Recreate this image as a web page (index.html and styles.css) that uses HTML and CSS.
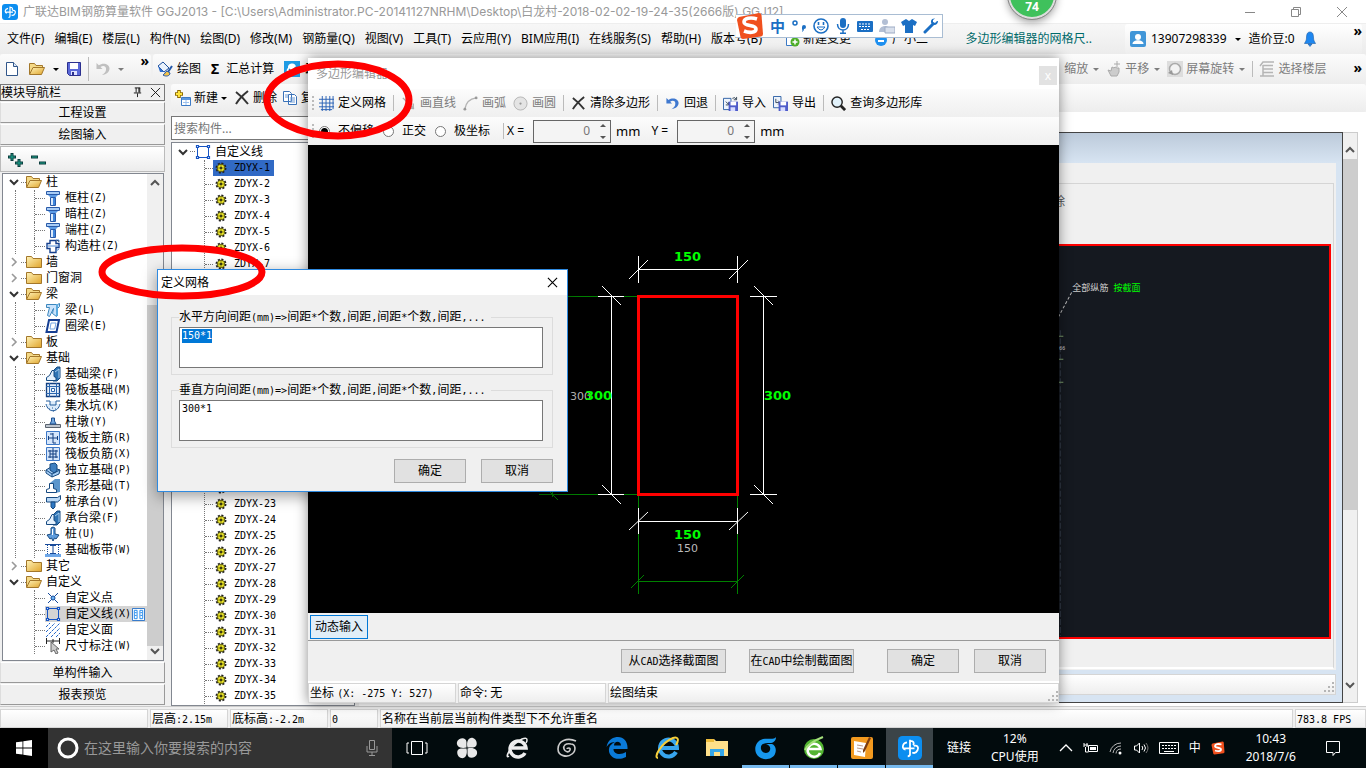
FILE: index.html
```html
<!DOCTYPE html>
<html lang="zh-CN">
<head>
<meta charset="utf-8">
<title>广联达BIM钢筋算量软件 GGJ2013</title>
<link rel="stylesheet" href="styles.css">
</head>
<body>
<svg class="sprite" aria-hidden="true">
  <defs>
    <linearGradient id="gold" x1="0" y1="0" x2="1" y2="1"><stop offset="0" stop-color="#fff3b8"/><stop offset="1" stop-color="#e0a52c"/></linearGradient>
    <linearGradient id="steel" x1="0" y1="0" x2="1" y2="0"><stop offset="0" stop-color="#fff"/><stop offset="1" stop-color="#3f86dc"/></linearGradient>
    <symbol id="app" viewBox="0 0 16 16"><rect width="16" height="16" rx="3" fill="#0c8ef0"/><path d="M8 2.500v9.500q0 1.500-1.500 1.500M6 4.300C2.500 5 2.500 9 5 9M3.500 8.200h7.500M8 3.300C10.500 3 11 5 10 6M10.500 6.500c2.500-.5 3.500 1 2.500 3s-2.500 2-3.500 1.500" fill="none" stroke="#fff" stroke-width="1.200"/></symbol>
    <symbol id="doc" viewBox="0 0 16 16"><path d="M2.500 1.500h7l4 4v9h-11z" fill="#fff" stroke="#31568a"/><path d="M9.500 1.500v4h4" fill="#dbe8f8" stroke="#31568a"/></symbol>
    <symbol id="folder-open" viewBox="0 0 16 16"><path d="M.5 13V2.500h5l1.500 2h6.500V7" fill="#f4d987" stroke="#a3772a"/><path d="M.5 13.500L4 6.500h11.500l-3 7z" fill="url(#gold)" stroke="#a3772a"/></symbol>
    <symbol id="folder" viewBox="0 0 16 16"><path d="M.5 13.500v-11h5l1.500 2h8.500v9z" fill="url(#gold)" stroke="#a3772a"/></symbol>
    <symbol id="save" viewBox="0 0 16 16"><path d="M1.500 1.500h13v13h-11l-2-2z" fill="#5a68d8" stroke="#2b2f8e"/><path d="M4 2h8v6H4z" fill="#fff"/><path d="M5 10h6v4H5z" fill="#dfe3ff"/><path d="M6 11h2v3H6z" fill="#2b2f8e"/></symbol>
    <symbol id="undo" viewBox="0 0 16 16"><path d="M1.500 2v6h6L5.500 6c3-2 6-.5 5.500 2.500 0 2-1.500 4-4 5.500 5-.5 7.500-3.500 7.500-6.500C14.500 3 8 1 3.800 4.300z" fill="currentColor"/></symbol>
    <symbol id="paint" viewBox="0 0 16 16"><path d="M1 5l5-4 6 6-5 4z" fill="#e9f1fb" stroke="#1e4f9b"/><path d="M1 5l2 6 4 0z" fill="#2f6fd0"/><path d="M15 5l-4 6" stroke="#2458a8" stroke-width="2"/><path d="M10 10c-2 1-2 3-4 4 3 2 7 1 7-2z" fill="#f3c34a" stroke="#2458a8"/></symbol>
    <symbol id="cloud" viewBox="0 0 16 16"><rect width="16" height="16" fill="#1f9be4"/><path d="M4 12a3 3 0 0 1 0-5 4 4 0 0 1 8-1 3 3 0 0 1 1 6z" fill="#fff"/><path d="M5 8l2.500 2.500L12 6" fill="none" stroke="#1f80c8" stroke-width="1.500"/></symbol>
    <symbol id="new" viewBox="0 0 16 16"><path d="M4 0v8M0 4h8" stroke="#8f6c00" stroke-width="3.600"/><path d="M4 1v6M1 4h6" stroke="#ffe33c" stroke-width="2"/><path d="M6.500 7.500h9v8h-9z" fill="#fff" stroke="#3c7ac6"/><path d="M7 8h8v2H7z" fill="#5c97df"/><path d="M8 12.500h6M11 10v5" stroke="#9cc1ee"/></symbol>
    <symbol id="cross" viewBox="0 0 16 16"><path d="M2 2c4 3 8 7 12 12M14 1C9 5 5 9 2 14" fill="none" stroke="#333" stroke-width="2"/></symbol>
    <symbol id="copy" viewBox="0 0 16 16"><path d="M1.500 1.500h6l2 2v8h-8zM6.500 4.500h6l2 2v8h-8z" fill="#fff" stroke="#3a72b9"/><path d="M8 8h5M8 10h5M8 12h5M3 5h3M3 7h3" stroke="#6c9ad4"/></symbol>
    <symbol id="grid" viewBox="0 0 16 16"><path d="M3.500 0v16M7.500 0v16M11.500 0v16M15 0v14M0 3.500h16M0 7.500h16M0 11.500h16M2 14.500h12" stroke="#2860b4"/></symbol>
    <symbol id="line" viewBox="0 0 16 16"><path d="M2 2l10 10M8 13h6M13 8v6" stroke="#aaa" stroke-width="1.500"/></symbol>
    <symbol id="arc" viewBox="0 0 16 16"><path d="M2 14C3 7 7 3 14 2" fill="none" stroke="#b4b4b4" stroke-width="1.500"/><circle cx="2" cy="14" r="1.500" fill="#999"/><circle cx="14" cy="2" r="1.500" fill="#999"/></symbol>
    <symbol id="circle" viewBox="0 0 16 16"><circle cx="8" cy="8" r="7" fill="#e4e4e4" stroke="#b4b4b4"/><circle cx="8" cy="8" r="1.200" fill="#999"/></symbol>
    <symbol id="import" viewBox="0 0 16 16"><path d="M.5 2.500h8v12h-8z" fill="#eef4fc" stroke="#2d5fa4"/><path d="M10 2.500q3-2 4 1M14.500 1v3h-3M3 6l3 3M6 6.500v3H3" fill="none" stroke="#345"/><path d="M6 6h10v10H6z" fill="#4f5cc9"/><path d="M8 6h6v4H8z" fill="#fff"/><path d="M8 12h5v4H8z" fill="#d8dcff"/></symbol>
    <symbol id="export" viewBox="0 0 16 16"><path d="M.5.500h8v12h-8z" fill="#eef4fc" stroke="#2d5fa4"/><path d="M3 3v4h4M5.500 5l2 2-2 2" fill="none" stroke="#345"/><path d="M6 6h10v10H6z" fill="#4f5cc9"/><path d="M8 6h6v4H8z" fill="#fff"/><path d="M8 12h5v4H8z" fill="#d8dcff"/></symbol>
    <symbol id="search" viewBox="0 0 16 16"><circle cx="6.500" cy="6.500" r="5.500" fill="#e2f2fb" stroke="#222" stroke-width="1.500"/><path d="M10.500 10.500L15 15" stroke="#222" stroke-width="3"/></symbol>
    <symbol id="hand" viewBox="0 0 16 16"><path d="M2 9l3 1 1-4 2 1 1-1 2 1 2 0v4l-2 4H5z" fill="#ccc" stroke="#aaa"/><path d="M11 0v6M8 3h6" stroke="#aaa"/></symbol>
    <symbol id="rotate" viewBox="0 0 16 16"><rect width="16" height="16" fill="#ddd"/><circle cx="8" cy="8" r="5.500" fill="#f3f3f3" stroke="#aaa" stroke-width="1.500"/><path d="M1 12l4-3 1 5z" fill="#999"/></symbol>
    <symbol id="floors" viewBox="0 0 16 16"><path d="M1 5l3-4h11M4 4.500h10M4 8h10M4 11.500h10M1 15h14M4 4v11" fill="none" stroke="#b5b5b5" stroke-width="1.500"/></symbol>
    <symbol id="user" viewBox="0 0 16 16"><rect width="16" height="16" rx="2" fill="#4196d8"/><circle cx="8" cy="6" r="3" fill="#fff"/><path d="M2.500 13c0-5 11-5 11 0z" fill="#fff"/></symbol>
    <symbol id="bell" viewBox="0 0 12 16"><path d="M6 1C3 1 2.500 4 2.500 7S1 11 .5 12.500h11C11 11 9.500 10 9.500 7S9 1 6 1zM4 13l2 2.500L8 13z" fill="#1e87f0" stroke="#1b5ca5" stroke-width=".6"/></symbol>
    <symbol id="col" viewBox="0 0 16 16"><path d="M1.500 1.500h13v3h-13z" fill="#a9cdf6" stroke="#2a5aa8"/><path d="M3 5h10l-2.500 2.500h-5z" fill="#5c9be6"/><path d="M5.500 7.500h5v8h-5z" fill="#dcebfc" stroke="#2a5aa8"/><path d="M9 8v7" stroke="#3f86dc" stroke-width="2"/></symbol>
    <symbol id="col2" viewBox="0 0 16 16"><path d="M5 2.500h6v3h3v4h-3v5H5v-4H2v-5h3z" fill="#fff" stroke="#153f8c" stroke-width="1.400"/><path d="M11 2l3 0v2M2 8h12M11 13l3-2" stroke="#4a86d2"/></symbol>
    <symbol id="beam" viewBox="0 0 16 16"><path d="M1.500 2.500h11l2-1v3l-3 3v7l-4-3 1-5-4 8-2-1 2-8h-3z" fill="#c8e2fb" stroke="#3b86bd"/><path d="M12 2v12" stroke="#5aa9de" stroke-width="2"/></symbol>
    <symbol id="ring" viewBox="0 0 16 16"><path d="M4 2h10l-2.500 12h-10z" fill="#fff" stroke="#163f93" stroke-width="2"/><path d="M6 5h5l-1.300 6H5z" fill="none" stroke="#75a6e5"/></symbol>
    <symbol id="found" viewBox="0 0 16 16"><path d="M7 6l5-5h3v11l-3 3H8z" fill="#2f74b4" stroke="#174a81"/><path d="M1.500 14.500v-3l3-2L7 4.500h2v6l2 1v3z" fill="#e6f2fd" stroke="#174a81"/><path d="M10 6l4-3v9" fill="none" stroke="#a9cff0"/></symbol>
    <symbol id="raft" viewBox="0 0 16 16"><path d="M1.500 1.500h13v13h-13z" fill="#e4effb" stroke="#123f80" stroke-width="1.300"/><path d="M1 4.500h14M1 11.500h14M4.500 1v14M11.500 1v14" stroke="#2c66ae"/><path d="M6.500 6.500h3v3h-3z" fill="#fff" stroke="#2c66ae"/></symbol>
    <symbol id="pit" viewBox="0 0 16 16"><path d="M1 3h4v4h6V3h4M1 6c2 9 12 9 14 0" fill="#dcebfa" stroke="#235c9c"/><path d="M4 11h1M7 10h1M10 11h1M8 13h1" stroke="#235c9c"/></symbol>
    <symbol id="pier" viewBox="0 0 16 16"><path d="M.5 10.500h15v3H.5z" fill="#bfc6cf" stroke="#5a636f"/><path d="M5 10l1.500-3V4h3v3L11 10z" fill="#73a8df" stroke="#1d4f8f"/></symbol>
    <symbol id="bar1" viewBox="0 0 16 16"><path d="M1.500 1.500h13v13h-13z" fill="#d5e6fb" stroke="#3d78c7"/><path d="M3 8h10M8 3v10M3.500 6v4M5 4h3M12.500 6v4M8 13h3" stroke="#123f80"/></symbol>
    <symbol id="bar2" viewBox="0 0 16 16"><path d="M1.500 1.500h13v13h-13z" fill="#d5e6fb" stroke="#3d78c7"/><path d="M3 5h10M3 11h10M8 2v12M5 4v8M11 4v8M5 8h6" stroke="#123f80"/></symbol>
    <symbol id="iso" viewBox="0 0 16 16"><path d="M1 8l5-3 9 3-1 4-7 3-6-4z" fill="#a5cdf4" stroke="#174a81"/><path d="M5 2l5-1 2 2v6l-3 2-4-3z" fill="#3f7fc0" stroke="#174a81"/><path d="M1 8l6 4 8-4M7 12v3" fill="none" stroke="#174a81"/></symbol>
    <symbol id="strip" viewBox="0 0 16 16"><path d="M5 5l5-4h5v13l-5 1z" fill="#5c96cc"/><path d="M1.500 14.500v-3l3-1V5.500h4v5l3 1v3z" fill="#fff" stroke="#174a81"/></symbol>
    <symbol id="cap" viewBox="0 0 16 16"><path d="M1.500 3.500h11l3-2v4l-3 2.500h-11z" fill="#b9d8f6" stroke="#174a81"/><path d="M6 8h4v5l-2 2-2-2z" fill="#2e78c4" stroke="#174a81"/></symbol>
    <symbol id="pile" viewBox="0 0 16 16"><path d="M6 2q2-2 4 0v6l4 1-3 4-1.500-1L8 15l-1.500-3-1.500 1-3-4 4-1z" fill="#5f9cdc" stroke="#174a81"/><path d="M7.500 3v6" stroke="#fff"/></symbol>
    <symbol id="slab" viewBox="0 0 16 16"><path d="M0 12h16v3H0z" fill="#6ea7e8"/><path d="M0 2.500h16M8 3v9M5 3.500h6M5 11.500h6" stroke="#174a9a"/><path d="M2.500 3v9M13.500 3v9" stroke="#174a9a" stroke-dasharray="1 1"/></symbol>
    <symbol id="pt" viewBox="0 0 16 16"><path d="M3 3l10 10M13 3L3 13" stroke="#174a9a"/><circle cx="8" cy="8" r="2" fill="#69b4f5" stroke="#174a9a"/></symbol>
    <symbol id="sq" viewBox="0 0 16 16"><path d="M2.500 2.500h11v11h-11z" fill="none" stroke="#1755c4"/><path d="M1.500 1.500h2v2h-2zM12.500 1.500h2v2h-2zM1.500 12.500h2v2h-2zM12.500 12.500h2v2h-2z" fill="#fff" stroke="#1755c4" stroke-width="1.200"/></symbol>
    <symbol id="hatch" viewBox="0 0 16 16"><path d="M1 5l4-4M1 10l9-9M1 15L15 1M6 15l9-9M11 15l4-4" stroke="#2467c9" stroke-dasharray="3 1"/></symbol>
    <symbol id="dim" viewBox="0 0 16 16"><path d="M1 3h14M1.500 0v6M8 1v4M14.500 0v6" stroke="#222"/><path d="M6 4v10l3-2 2 4 2-1-2-4h3z" fill="#ccc" stroke="#666"/></symbol>
    <symbol id="gear" viewBox="0 0 12 12"><circle cx="6" cy="6" r="4.500" fill="none" stroke="#222" stroke-width="2" stroke-dasharray="2 1.500"/><circle cx="6" cy="6" r="3.800" fill="#efe92a" stroke="#3b3900" stroke-width=".7"/><circle cx="6" cy="6" r="1.300" fill="#222"/><path d="M6 2v8M2 6h8" stroke="#555200" stroke-width=".6"/></symbol>
    <symbol id="down" viewBox="0 0 10 10"><path d="M1 3l4 4 4-4" fill="none" stroke="currentColor" stroke-width="2"/></symbol>
    <symbol id="right" viewBox="0 0 10 10"><path d="M3 1l4 4-4 4" fill="none" stroke="#999" stroke-width="1.600"/></symbol>
    <symbol id="up" viewBox="0 0 10 10"><path d="M1 7l4-4 4 4" fill="none" stroke="currentColor" stroke-width="2"/></symbol>
    <symbol id="sogou" viewBox="0 0 28 28"><path d="M3 5L23 1q2 0 2.500 2L27 22q0 2-2 2.500L7 27q-2 0-2.500-2L1 8q0-2 2-3z" fill="#f0501e"/><path d="M21 7c-6-2-13-1-13 3 0 5 12 2 12 7 0 4-7 4-12 2" fill="none" stroke="#fff" stroke-width="3.600"/></symbol>
    <symbol id="x" viewBox="0 0 12 12"><path d="M1 1l10 10M11 1L1 11" stroke="currentColor" stroke-width="1.200"/></symbol>
  </defs>
</svg>

<div class="app">
  <header class="titlebar">
    <svg class="i"><use href="#app"/></svg>
    <h1>广联达BIM钢筋算量软件 GGJ2013 - [C:\Users\Administrator.PC-20141127NRHM\Desktop\白龙村-2018-02-02-19-24-35(2666版).GGJ12]</h1>
    <div class="winctl">
      <button aria-label="最小化"><svg viewBox="0 0 12 12"><path d="M1 6.500h10" stroke="#888"/></svg></button>
      <button aria-label="还原"><svg viewBox="0 0 12 12"><path d="M1.500 3.500h7v7h-7zM3.500 3V1.500h7v7H9" fill="none" stroke="#888"/></svg></button>
      <button aria-label="关闭"><svg viewBox="0 0 12 12"><path d="M1 1l10 10M11 1L1 11" stroke="#888"/></svg></button>
    </div>
  </header>

  <nav class="menubar">
    <button>文件(F)</button><button>编辑(E)</button><button>楼层(L)</button><button>构件(N)</button><button>绘图(D)</button><button>修改(M)</button><button>钢筋量(Q)</button><button>视图(V)</button><button>工具(T)</button><button>云应用(Y)</button><button>BIM应用(I)</button><button>在线服务(S)</button><button>帮助(H)</button><button>版本号(B)</button>
    <button class="ib"><svg class="i" viewBox="0 0 16 16"><path d="M2.500 1.500h10v13h-10z" fill="#fff" stroke="#3c7ac6"/><circle cx="11" cy="11" r="4.500" fill="#4eae28"/><path d="M11 8.500v5M8.500 11h5" stroke="#fff" stroke-width="1.500"/></svg>新建变更</button>
    <button class="ib"><svg class="i" viewBox="0 0 16 16"><circle cx="8" cy="9" r="6" fill="#1e90f0"/><circle cx="3" cy="4" r="2" fill="#1e90f0"/><circle cx="13" cy="4" r="2" fill="#1e90f0"/><path d="M5 10h6" stroke="#fff" stroke-width="2"/></svg>广小二</button>
    <a class="tip" href="#">多边形编辑器的网格尺..</a>
    <div class="account">
      <svg class="i"><use href="#user"/></svg><span>13907298339</span><i class="caret"></i><span>造价豆:0</span><svg class="bell"><use href="#bell"/></svg><b class="more">»</b>
    </div>
  </nav>

  <div class="toolrow">
    <div class="strip file">
      <svg class="i"><use href="#doc"/></svg><svg class="i wide"><use href="#folder-open"/></svg><i class="caret"></i><svg class="i"><use href="#save"/></svg><i class="sep"></i><svg class="i off"><use href="#undo"/></svg><i class="caret off"></i><b class="more">»</b>
    </div>
    <div class="strip grow">
      <button class="ib"><svg class="i"><use href="#paint"/></svg>绘图</button>
      <button class="ib"><b class="sigma">Σ</b>汇总计算</button>
      <button class="ib"><svg class="i"><use href="#cloud"/></svg>云检查</button>
      <div class="right off">
        <button class="ib">缩放 <i class="caret"></i></button>
        <button class="ib"><svg class="i"><use href="#hand"/></svg>平移 <i class="caret"></i></button>
        <button class="ib"><svg class="i"><use href="#rotate"/></svg>屏幕旋转<i class="caret"></i></button>
        <i class="sep"></i>
        <button class="ib"><svg class="i"><use href="#floors"/></svg>选择楼层</button>
        <b class="more">»</b>
      </div>
    </div>
  </div>

  <main class="main">
    <aside class="nav">
      <div class="navhead"><span>模块导航栏</span><svg viewBox="0 0 12 12"><path d="M3 1h6M4.500 1v5M7.500 1v5M8.500 1v5M2 6.500h8M6 7v4" stroke="#111" fill="none"/></svg><svg viewBox="0 0 12 12"><path d="M1 1l10 10M11 1L1 11" stroke="#111"/></svg></div>
      <button class="navbtn">工程设置</button>
      <button class="navbtn">绘图输入</button>
      <div class="navtools"><svg viewBox="0 0 42 18"><path d="M6 1v8M2 5h8M13 7v8M9 11h8M25 5h7M33 11h7" stroke="#0b3d3d" stroke-width="3"/><path d="M6 2v6M3 5h6M13 8v6M10 11h6M26 5h5M34 11h5" stroke="#1ca38c"/></svg></div>
      <div class="treewrap">
        <ul class="tree">
          <li><div class="row"><svg class="ch"><use href="#down"/></svg><i></i><svg class="i"><use href="#folder-open"/></svg>柱</div>
            <ul><li><svg class="i"><use href="#col"/></svg>框柱<s>(Z)</s></li><li><svg class="i"><use href="#col"/></svg>暗柱<s>(Z)</s></li><li><svg class="i"><use href="#col"/></svg>端柱<s>(Z)</s></li><li><svg class="i"><use href="#col2"/></svg>构造柱<s>(Z)</s></li></ul></li>
          <li><div class="row"><svg class="ch"><use href="#right"/></svg><i></i><svg class="i"><use href="#folder"/></svg>墙</div></li>
          <li><div class="row"><svg class="ch"><use href="#right"/></svg><i></i><svg class="i"><use href="#folder"/></svg>门窗洞</div></li>
          <li><div class="row"><svg class="ch"><use href="#down"/></svg><i></i><svg class="i"><use href="#folder-open"/></svg>梁</div>
            <ul><li><svg class="i"><use href="#beam"/></svg>梁<s>(L)</s></li><li><svg class="i"><use href="#ring"/></svg>圈梁<s>(E)</s></li></ul></li>
          <li><div class="row"><svg class="ch"><use href="#right"/></svg><i></i><svg class="i"><use href="#folder"/></svg>板</div></li>
          <li><div class="row"><svg class="ch"><use href="#down"/></svg><i></i><svg class="i"><use href="#folder-open"/></svg>基础</div>
            <ul><li><svg class="i"><use href="#found"/></svg>基础梁<s>(F)</s></li><li><svg class="i"><use href="#raft"/></svg>筏板基础<s>(M)</s></li><li><svg class="i"><use href="#pit"/></svg>集水坑<s>(K)</s></li><li><svg class="i"><use href="#pier"/></svg>柱墩<s>(Y)</s></li><li><svg class="i"><use href="#bar1"/></svg>筏板主筋<s>(R)</s></li><li><svg class="i"><use href="#bar2"/></svg>筏板负筋<s>(X)</s></li><li><svg class="i"><use href="#iso"/></svg>独立基础<s>(P)</s></li><li><svg class="i"><use href="#strip"/></svg>条形基础<s>(T)</s></li><li><svg class="i"><use href="#cap"/></svg>桩承台<s>(V)</s></li><li><svg class="i"><use href="#found"/></svg>承台梁<s>(F)</s></li><li><svg class="i"><use href="#pile"/></svg>桩<s>(U)</s></li><li><svg class="i"><use href="#slab"/></svg>基础板带<s>(W)</s></li></ul></li>
          <li><div class="row"><svg class="ch"><use href="#right"/></svg><i></i><svg class="i"><use href="#folder"/></svg>其它</div></li>
          <li><div class="row"><svg class="ch"><use href="#down"/></svg><i></i><svg class="i"><use href="#folder-open"/></svg>自定义</div>
            <ul class="last"><li><svg class="i"><use href="#pt"/></svg>自定义点</li><li class="cur"><svg class="i"><use href="#sq"/></svg>自定义线<s>(X)</s><svg class="book" viewBox="0 0 14 14"><path d="M.5.500h13v13H.5z" fill="#fff" stroke="#246fc8"/><path d="M2.500 2.500h3v9h-3zM8.500 2.500h3v9h-3zM3 5h2M3 8h2M9 5h2M9 8h2" fill="none" stroke="#1e88ec"/></svg></li><li><svg class="i"><use href="#hatch"/></svg>自定义面</li><li><svg class="i"><use href="#dim"/></svg>尺寸标注<s>(W)</s></li></ul></li>
        </ul>
        <div class="vbar"><svg><use href="#up"/></svg><div class="t1"></div><div class="t2"></div><svg><use href="#down"/></svg></div>
      </div>
      <button class="navbtn">单构件输入</button>
      <button class="navbtn">报表预览</button>
    </aside>

    <section class="work">
      <div class="strip comp">
        <button class="ib"><svg class="i"><use href="#new"/></svg>新建<i class="caret"></i></button>
        <button class="ib"><svg class="i"><use href="#cross"/></svg>删除</button>
        <button class="ib"><svg class="i"><use href="#copy"/></svg>复制</button>
      </div>
      <div class="panes">
        <div class="list">
          <input type="text" placeholder="搜索构件..." aria-label="搜索构件">
          <div class="comps">
            <div class="root"><svg class="ch"><use href="#down"/></svg><i></i><svg class="i"><use href="#sq"/></svg>自定义线</div>
            <ul id="comps"></ul>
          </div>
        </div>
        <div class="mdi">
          <div class="child">
            <div class="cbody">
              <div class="cbox">
                <div class="ctool"><span>删除</span></div>
                <svg class="cad" viewBox="1059 246 270 390" preserveAspectRatio="xMaxYMin meet">
                  <path d="M1059 317l14-26" stroke="#bbb" stroke-dasharray="3 2"/>
                  <path d="M1061 330v305" stroke="#343c48" stroke-dasharray="6 2"/>
                  <path d="M1059 336h5M1059 359h5M1059 382h5" stroke="#7a9a6a"/>
                  <text x="1073" y="291" fill="#ccc">全部纵筋</text><text x="1114" y="291" fill="#0f0">按截面</text>
                  <text x="1060" y="350" fill="#ddd" class="tiny">66</text>
                </svg>
              </div>
            </div>
            <div class="cstat"><svg class="grip" viewBox="0 0 12 12"><path d="M9 1h2M5 5h2M9 5h2M1 9h2M5 9h2M9 9h2" stroke="#b5b5b5" stroke-width="2"/></svg></div>
          </div>
          <div class="vbar out"><svg><use href="#up"/></svg><div class="t2"></div><svg><use href="#down"/></svg></div>
        </div>
      </div>
    </section>
  </main>

  <footer class="status"><span class="c1"></span><span class="c2">层高<s>:2.15m</s></span><span class="c3">底标高<s>:-2.2m</s></span><span class="c4"><s>0</s></span><span class="c5">名称在当前层当前构件类型下不允许重名</span><span class="c6"><s>783.8 FPS</s></span></footer>

  <div class="taskbar">
    <button class="start" aria-label="开始"><svg viewBox="0 0 16 16"><path d="M0 2.300L6.500 1.400v6.200H0zM7.300 1.300L16 0v7.600H7.300zM0 8.400h6.500v6.200L0 13.700zM7.300 8.400H16V16l-8.700-1.300z" fill="#fff"/></svg></button>
    <label class="cortana"><svg viewBox="0 0 22 22"><circle cx="11" cy="11" r="9" fill="none" stroke="#fff" stroke-width="3"/></svg><input type="text" placeholder="在这里输入你要搜索的内容"><svg class="mic" viewBox="0 0 12 18"><path d="M3.500 1.500h5v9h-5zM1 7v6h10V7M6 13v4M3 16.500h6" fill="none" stroke="#999"/></svg></label>
    <div class="apps">
      <button aria-label="任务视图"><svg viewBox="0 0 24 24"><path d="M6.500 5.500h11v13h-11zM4 7H2v10h2M20 7h2v10h-2" fill="none" stroke="#fff"/></svg></button>
      <button aria-label="应用"><svg viewBox="0 0 24 24"><path d="M11.500 11.500C5 13 1 10 2 6s9-6 9.500 0zM12.500 11.500C11 5 14 1 18 2s6 9 0 9.500zM12.500 12.500C19 11 23 14 22 18s-9 6-9.500 0zM11.500 12.500C13 19 10 23 6 22s-6-9 0-9.500z" fill="#e8e8e8"/></svg></button>
      <button aria-label="浏览器"><svg viewBox="0 0 24 24"><path d="M20 17a8 8 0 1 1 1-5H7" fill="none" stroke="#eee" stroke-width="3.500"/><path d="M4 20C-1 24 5 9 17 3c8-3 4 4 4 4" fill="none" stroke="#eee" stroke-width="1.500"/></svg></button>
      <button aria-label="螺旋"><svg viewBox="0 0 24 24"><path d="M21 5C12 1 3 5 3 13c0 7 9 9 14 5 5-4 3-10-1-10-6-1-8 2-7 5s5 4 6 1-3-2-3-1" fill="none" stroke="#ccc" stroke-width="1.600"/></svg></button>
      <button aria-label="Edge"><svg viewBox="0 0 24 24"><path d="M1.500 11C3 3 9 1 13 1c6 0 10 5 9.500 12H8.500c0 6 8 6 12.500 3v5C11 26 3 20 4 13c.5-4 4-6 6-7-5 0-7 3-8.500 5zM9 9.500h7c0-5-7-5-7 0z" fill="#0a7ad8"/></svg></button>
      <button aria-label="IE"><svg viewBox="0 0 24 24"><path d="M21 16a8.500 8.500 0 1 1 1-4H7" fill="none" stroke="#37a5ee" stroke-width="4"/><path d="M3 22C-2 22 6 7 18 2c7-2 5 4 3 7" fill="none" stroke="#f6cf3c" stroke-width="2"/></svg></button>
      <button aria-label="文件资源管理器"><svg viewBox="0 0 24 24"><path d="M1 3h8l2 2h12v15H1z" fill="#ffe08a"/><path d="M1 3h8v3H1z" fill="#eebd3c"/><path d="M5 20v-7h14v7h-4v-4H9v4z" fill="#35a6e8"/></svg></button>
      <button class="run" aria-label="广联达G"><svg viewBox="0 0 24 24"><path d="M22 1c-2 3-8 1-13 2C2 5 0 12 2 17c3 8 16 8 19 1 2-5 0-9-3-10h-6c3 1 5 3 4 6-1 4-8 4-9-1-1-6 5-6 9-6 3 0 6-2 6-6z" fill="#1798ee"/></svg></button>
      <button class="run" aria-label="360"><svg viewBox="0 0 24 24"><circle cx="12" cy="13" r="10" fill="#53b532"/><path d="M18 17a6.500 6.500 0 1 1 .5-4H7" fill="none" stroke="#fff" stroke-width="2.500"/><path d="M3 14C7 6 16 3 21 1" fill="none" stroke="#a5e07c" stroke-width="2"/></svg></button>
      <button class="run" aria-label="记事"><svg viewBox="0 0 24 24"><rect x="1" y="1" width="22" height="22" rx="2" fill="#f29a1f"/><path d="M4 5l12 2-1 14-11-2z" fill="#fff"/><path d="M7 9l6 1M7 12l6 1M7 15l4 1" stroke="#b98"/><path d="M21 2l-6 13-2 2 0-3 6-13z" fill="#7a3b10"/></svg></button>
      <button class="run act" aria-label="钢筋算量"><svg viewBox="0 0 16 16"><use href="#app"/></svg></button>
    </div>
    <div class="tray">
      <span>链接</span>
      <span class="two">12%<br>CPU使用</span>
      <svg viewBox="0 0 14 14"><path d="M1 10l6-6 6 6" fill="none" stroke="#fff" stroke-width="1.300"/></svg>
      <svg viewBox="0 0 16 14"><path d="M5.500 4.500h9v6h-9zM1 4h4M1 2v4M4 2v4M2.500 6v5h3" fill="none" stroke="#fff"/><path d="M7 6h6v3H7z" fill="#fff"/></svg>
      <svg viewBox="0 0 14 14"><path d="M1 11A11 11 0 0 1 12 2M4 12a8 8 0 0 1 8-7M7 12.500A5 5 0 0 1 12 8" fill="none" stroke="#bbb"/><circle cx="11" cy="12" r="1.500" fill="#fff"/></svg>
      <svg viewBox="0 0 16 14"><path d="M1.500 5h2l3-3v10l-3-3h-2zM9 5q1.500 2 0 4M11 3.500q3 3.500 0 7" fill="none" stroke="#fff"/><path d="M13 2q4 5 0 10" fill="none" stroke="#777"/></svg>
      <svg class="kb" viewBox="0 0 22 14"><path d="M1.500 1.500h19v11h-19z" fill="none" stroke="#fff"/><path d="M4 4.500h14M4 7.500h14" stroke="#fff" stroke-dasharray="2 1"/><path d="M6 10.500h10" stroke="#fff"/></svg>
      <span>中</span>
      <svg viewBox="0 0 28 28"><use href="#sogou"/></svg>
      <time class="two">10:43<br>2018/7/6</time>
      <svg class="note" viewBox="0 0 18 18"><path d="M2.500 2.500h13v11h-4l-2.500 3v-3h-6.500z" fill="none" stroke="#fff"/></svg>
    </div>
  </div>
</div>

<section class="win editor">
  <header><h2>多边形编辑器</h2><button aria-label="关闭">x</button></header>
  <div class="etools">
    <i class="drag"></i>
    <button class="ib"><svg class="i"><use href="#grid"/></svg>定义网格</button><i class="sep"></i>
    <button class="ib off"><svg class="i"><use href="#line"/></svg>画直线</button>
    <button class="ib off"><svg class="i"><use href="#arc"/></svg>画弧</button>
    <button class="ib off"><svg class="i"><use href="#circle"/></svg>画圆</button><i class="sep"></i>
    <button class="ib"><svg class="i"><use href="#cross"/></svg>清除多边形</button><i class="sep"></i>
    <button class="ib"><svg class="i blue"><use href="#undo"/></svg>回退</button><i class="sep"></i>
    <button class="ib"><svg class="i"><use href="#import"/></svg>导入</button>
    <button class="ib"><svg class="i"><use href="#export"/></svg>导出</button><i class="sep"></i>
    <button class="ib"><svg class="i"><use href="#search"/></svg>查询多边形库</button>
  </div>
  <div class="eopts">
    <i class="drag"></i>
    <label><input type="radio" name="off" checked>不偏移</label>
    <label><input type="radio" name="off">正交</label>
    <label><input type="radio" name="off">极坐标</label>
    <i class="sep"></i>
    <label class="num" for="nx">X =</label><span class="spin"><input id="nx" type="text" value="0"><i></i></span><span class="mm">mm</span>
    <label class="num" for="ny">Y =</label><span class="spin"><input id="ny" type="text" value="0"><i></i></span><span class="mm">mm</span>
  </div>
  <svg class="draw" viewBox="308 145 751 468">
    <g stroke="#008000" fill="none"><path d="M560 296.500h78M539 494.500h99M638.500 496v98M737.500 496v98M638 581.500h100M631 588l13-13M731 588l13-13M545 487l13 13M552.500 487v10"/></g>
    <g stroke="#fff" fill="none"><path d="M638.500 256v27M737.500 256v27M638 269.500h100M629 279l19-19M729 279l19-19M638.500 508v26M737.500 508v26M638 521.500h100M629 530l19-18M729 530l19-18M611.500 296v199M598 296.500h26M598 494.500h26M602 286l19 19M602 485l19 19M763.500 296v199M750 296.500h27M750 494.500h27M754 286l19 19M754 485l19 19"/></g>
    <rect x="638.500" y="296.500" width="99" height="198" fill="none" stroke="#f00" stroke-width="3"/>
    <text x="674" y="261" class="g">150</text><text x="674" y="539" class="g">150</text><text x="570" y="400" class="w">300</text><text x="585" y="400" class="g">300</text><text x="764" y="400" class="g">300</text><text x="677" y="552" class="w">150</text>
  </svg>
  <div class="dyn"><button>动态输入</button></div>
  <div class="ebtns"><button class="b wide">从<s>CAD</s>选择截面图</button><button class="b wide">在<s>CAD</s>中绘制截面图</button><button class="b ok">确定</button><button class="b">取消</button></div>
  <footer class="estat"><span>坐标 <s>(X: -275 Y: 527)</s></span><span>命令: 无</span><span>绘图结束</span><svg class="grip" viewBox="0 0 12 12"><path d="M9 1h2M5 5h2M9 5h2M1 9h2M5 9h2M9 9h2" stroke="#b5b5b5" stroke-width="2"/></svg></footer>
</section>

<section class="win dialog">
  <header><h2>定义网格</h2><button aria-label="关闭"><svg><use href="#x"/></svg></button></header>
  <form>
    <fieldset><legend><label for="h">水平方向间距<s>(mm)=&gt;</s>间距<s>*</s>个数<s>,</s>间距<s>,</s>间距<s>*</s>个数<s>,</s>间距<s>,...</s></label></legend><textarea id="h">150*1</textarea></fieldset>
    <fieldset><legend><label for="v">垂直方向间距<s>(mm)=&gt;</s>间距<s>*</s>个数<s>,</s>间距<s>,</s>间距<s>*</s>个数<s>,</s>间距<s>,...</s></label></legend><textarea id="v">300*1</textarea></fieldset>
    <div class="btns"><button type="button" class="b">确定</button><button type="button" class="b">取消</button></div>
  </form>
</section>

<div class="ime">
  <svg class="logo"><use href="#sogou"/></svg>
  <b>中</b>
  <svg viewBox="0 0 16 16"><circle cx="4" cy="5" r="2" fill="none" stroke="#1b6fc4" stroke-width="1.500"/><path d="M11 9a2 2 0 1 1 2 2q0 2-2 3 1-2 0-3" fill="#1b6fc4"/></svg>
  <svg viewBox="0 0 16 16"><circle cx="8" cy="8" r="7" fill="none" stroke="#1b6fc4" stroke-width="1.600"/><path d="M4 9q4 6 8 0z" fill="none" stroke="#1b6fc4"/><path d="M5.500 4v3M10.500 4v3" stroke="#1b6fc4" stroke-width="1.600"/></svg>
  <svg viewBox="0 0 16 16"><rect x="5" y="0" width="6" height="10" rx="3" fill="#1b6fc4"/><path d="M2.500 6c0 8 11 8 11 0M8 12v3M5 15.200h6" fill="none" stroke="#1b6fc4" stroke-width="1.500"/></svg>
  <svg viewBox="0 0 16 16"><rect y="3" width="16" height="11" rx="1" fill="#1b6fc4"/><path d="M2 6h12M2 8.500h12M4 11.500h8" stroke="#fff" stroke-dasharray="2 1"/></svg>
  <svg viewBox="0 0 16 16"><circle cx="6" cy="4" r="3" fill="#b3bfd4"/><path d="M0 14c0-8 12-8 12 0z" fill="#b3bfd4"/><path d="M6 9h10v6H6z" fill="#d9e0ec" stroke="#9dabc4"/></svg>
  <svg viewBox="0 0 16 16"><path d="M5 1l3 2 3-2 5 3-2 4-2-1v8H4V7L2 8 0 4z" fill="#1b6fc4"/></svg>
  <svg viewBox="0 0 16 16"><path d="M2 14l8-8" stroke="#1b6fc4" stroke-width="3" stroke-linecap="round"/><path d="M14 3l-2 2-2-1V2l2-1.500C8 0 7 4 9 6s6 1 6-3z" fill="#1b6fc4"/></svg>
</div>
<div class="ball">74</div>
<svg class="marks" viewBox="0 0 1366 768" aria-hidden="true"><g fill="none" stroke="#f00"><ellipse cx="338" cy="100" rx="71" ry="36" stroke-width="7"/><ellipse cx="182" cy="272" rx="80" ry="24" stroke-width="7"/></g></svg>
<script src="app.js"></script>
</body>
</html>
```

FILE: styles.css
```css
* { box-sizing: border-box; }
body { margin: 0; overflow: hidden; background: #f0f0f0; color: #000; font: 12px/16px "Noto Sans", "Noto Sans CJK SC", sans-serif; }
button, input, textarea { font: inherit; color: inherit; margin: 0; }
button { border: 0; padding: 0; background: none; white-space: nowrap; }
ul { list-style: none; margin: 0; padding: 0; }
h1, h2 { margin: 0; font: inherit; }
a { text-decoration: none; }
s { text-decoration: none; font: 10px/16px "DejaVu Sans Mono", monospace; }
svg { display: block; flex: none; }
.sprite { position: absolute; width: 0; height: 0; }
.i { width: 16px; height: 16px; }
.ib { display: flex; align-items: center; gap: 4px; }
.off { color: #7c7c7c; }
svg.off { color: #c0c0c0; }
.blue { color: #3f78cf; }
.caret { border: 3px solid transparent; border-top-color: currentColor; border-bottom: 0; flex: none; margin: 0 3px; }
.sep { width: 1px; height: 16px; background: #bbb; flex: none; }
.more { font-size: 14px; line-height: 14px; align-self: flex-start; color: #000; }

.app { height: 100vh; display: flex; flex-direction: column; }
.titlebar { height: 23px; display: flex; align-items: center; gap: 5px; padding: 0 18px 0 2px; background: #fff; color: #999; }
.titlebar h1 { flex: 1; white-space: nowrap; overflow: hidden; font-family: Inter, "Noto Sans CJK SC", sans-serif; }
.winctl { display: flex; gap: 34px; }
.winctl svg { width: 12px; height: 12px; }

.menubar { height: 31px; display: flex; align-items: center; gap: 10px; padding: 0 4px 0 7px; background: linear-gradient(#f7f7f7, #ececec); border-top: 1px solid #eee; white-space: nowrap; }
.menubar .ib { margin-left: 12px; gap: 3px; }
.tip { margin-left: auto; margin-right: 23px; color: #006a6a; }
.account { display: flex; align-items: center; gap: 5px; padding-left: 5px; width: 237px; height: 30px; background: linear-gradient(#fff, #eee); border-radius: 3px; }
.bell { width: 12px; height: 16px; margin-left: 4px; }
.account .more { margin-left: auto; }

.toolrow { display: flex; height: 30px; gap: 2px; }
.strip { display: flex; align-items: center; background: linear-gradient(#fcfcfc, #ededed); border-radius: 3px; }
.file { width: 151px; padding: 0 2px 0 4px; gap: 4px; }
.file .wide { margin-left: 4px; width: 18px; }
.file .sep { height: 24px; margin: 0 2px; }
.file .more { margin-left: auto; }
.grow { flex: 1; padding-left: 4px; gap: 10px; padding-right: 4px; }
.sigma { font-size: 14px; margin-right: 3px; }
.right { margin-left: auto; display: flex; align-items: center; gap: 6px; }
.right .ib { gap: 3px; }
.right .caret { margin: 0 1px 0 2px; }
.right .more { margin-left: 21px; }

.main { flex: 1; min-height: 0; display: flex; gap: 6px; }
.nav { width: 165px; display: flex; flex-direction: column; gap: 1px; padding-bottom: 1px; }
.navhead { height: 17px; display: flex; align-items: center; border: 1px solid #777; gap: 7px; padding-right: 3px; line-height: 14px; }
.navhead span { flex: 1; }
.navhead svg { width: 11px; height: 11px; }
.navbtn { height: 21px; border: 1px solid #888; border-color: #fff #999 #999 #ddd; background: #f0f0f0; }
.navtools { height: 26px; padding: 5px; background: linear-gradient(#fff, #ececec); border: 1px solid #bbb; }
.navtools svg { width: 42px; height: 18px; }
.treewrap { flex: 1; min-height: 0; display: flex; justify-content: space-between; background: #fff; border: 1px solid #828790; margin: 0 1px 0 2px; }
.tree { white-space: nowrap; overflow: hidden; flex: 1; }
.row, .tree ul li { display: flex; align-items: center; height: 16px; }
.row { padding-left: 6px; }
.ch { width: 10px; height: 10px; color: #333; }
.row i, .root i { width: 5px; border-top: 1px dotted #777; margin: 0 0 0 2px; }
.row .i { margin-right: 4px; }
.tree ul { margin-left: 12px; border-left: 1px dotted #777; padding-left: 18px; }
.tree .last { border-color: transparent; }
.tree ul li { border-left: 1px dotted #777; gap: 4px; }
.tree ul li::before { content: ""; width: 10px; margin-right: -4px; border-top: 1px dotted #777; }
.tree .cur { background: linear-gradient(#d4d4d4, #d4d4d4) 10px 0 no-repeat; }
.tree s { margin-left: -4px; }
.book { width: 13px; height: 13px; margin-left: -3px; }
.vbar { width: 16px; display: flex; flex-direction: column; align-items: center; justify-content: space-between; padding: 4px 0; background: #f0f0f0; color: #555; }
.vbar svg { width: 10px; height: 10px; }
.vbar div { width: 100%; }
.t1 { flex: 113; }
.t2 { flex: 328; background: #cdcdcd; }
.vbar.out .t2 { flex: 1; margin: 4px 0 170px; }

.work { flex: 1; display: flex; flex-direction: column; min-width: 0; }
.comp { height: 28px; padding-left: 4px; gap: 5px; }
.comp .ib { gap: 3px; }
.comp .caret { margin: 0 2px 0 0; }
.panes { flex: 1; min-height: 0; display: flex; gap: 4px; }
.list { width: 184px; display: flex; flex-direction: column; gap: 2px; padding-top: 4px; }
.list input { height: 24px; border: 1px solid #777; background: #fff; padding: 0 2px; }
.list input::placeholder { color: #777; }
.comps { flex: 1; min-height: 0; overflow: hidden; background: #fff; border: 1px solid #828790; }
.root { display: flex; align-items: center; height: 17px; padding-left: 6px; }
.root .i { margin: 0 4px 0 0; }
.comps ul { margin-left: 32px; border-left: 1px dotted #777; }
.comps li { display: flex; align-items: center; height: 16px; }
.comps li::before { content: ""; width: 8px; border-top: 1px dotted #777; }
.comps li span { display: flex; align-items: center; gap: 7px; height: 16px; padding: 0 4px 0 2px; }
.comps li svg { width: 12px; height: 12px; }
.comps li.sel span { background: #316ac5; }

.mdi { flex: 1; display: flex; min-width: 0; background: #fff; padding: 20px 8px 3px 0; }
.child { flex: 1; min-width: 0; display: flex; flex-direction: column; gap: 4px; border: 1px solid #444; padding: 30px 6px 7px; background: linear-gradient(#bccada, #d7e4f2 30px); }
.cbody { flex: 1; min-height: 0; display: flex; background: #f0f0f0; padding: 20px 2px 1px; }
.cbox { flex: 1; min-width: 0; display: flex; flex-direction: column; border: 1px solid #d5d5d5; border-bottom: 2px solid #fff; padding: 3px 2px 28px; }
.ctool { height: 57px; padding: 7px 0 0 670px; color: #555; }
.cad { flex: 1; min-height: 0; width: 100%; background: #151920; border: 2px solid #f00; font-size: 9px; }
.tiny { font-size: 5px; }
.cstat { height: 21px; background: linear-gradient(#fff, #eee); border: 1px solid #d5d5d5; display: flex; justify-content: flex-end; align-items: flex-end; }
.grip { width: 12px; height: 12px; }
.vbar.out { padding: 12px 0; border: 1px solid #ccc; border-left: 0; width: 15px; }

.status { height: 22px; display: flex; gap: 2px; padding-top: 2px; border-top: 1px solid #ccc; background: #f0f0f0; white-space: nowrap; }
.status span { border: 1px solid #d5d5d5; background: linear-gradient(#fff, #f0f0f0); padding-left: 1px; line-height: 17px; }
.c1 { width: 148px; }
.c2 { width: 78px; }
.c3 { width: 98px; }
.c4 { width: 48px; }
.c5 { flex: 1; }
.c6 { width: 71px; }

.taskbar { height: 40px; display: flex; background: #020b0d; color: #fff; }
.start { width: 48px; display: grid; place-items: center; background: #000; }
.start svg { width: 16px; height: 16px; }
.cortana { width: 344px; display: flex; align-items: center; gap: 5px; padding: 0 14px 0 9px; background: #333; }
.cortana svg { width: 22px; height: 22px; }
.cortana input { flex: 1; min-width: 0; border: 0; padding: 0; background: none; font-size: 14px; }
.cortana input::placeholder { color: #999; }
.cortana .mic { width: 12px; height: 18px; }
.apps { display: flex; }
.apps button { width: 49px; height: 40px; display: grid; place-items: center; border: solid transparent; border-width: 3px 0; margin-right: 1px; }
.apps button svg { width: 24px; height: 24px; }
.apps .run { width: 47px; border-bottom-color: #76b9ed; }
.apps .act { background: #3b4448; }
.tray { flex: 1; display: flex; align-items: center; gap: 9px; padding: 0 24px 0 13px; }
.tray svg { width: 16px; height: 14px; }
.tray .kb { width: 22px; }
.tray .note { width: 18px; height: 18px; margin-left: auto; }
.two { text-align: center; line-height: 18px; margin: 0 10px 0 11px; }

.win { position: absolute; display: flex; flex-direction: column; background: #f0f0f0; white-space: nowrap; }
.editor { left: 308px; top: 58px; width: 751px; box-shadow: 0 0 12px rgba(0,0,0,.45); }
.editor header { height: 31px; display: flex; justify-content: space-between; align-items: center; padding: 0 2px 0 8px; background: #fff; color: #999; }
.editor header button { width: 18px; height: 19px; background: #e2e2e2; color: #fff; margin-top: 4px; }
.etools, .eopts { display: flex; align-items: center; gap: 7px; height: 28px; padding-left: 4px; background: linear-gradient(#fcfcfc, #efefef); }
.etools .i { width: 15px; height: 15px; }
.drag { width: 2px; height: 14px; border-left: 2px dotted #bbb; margin-right: -2px; }
.eopts label { display: flex; align-items: center; gap: 8px; margin-right: 2px; }
.eopts input[type=radio] { appearance: none; width: 11px; height: 11px; border: 1px solid #777; border-radius: 50%; background: #fff; }
.eopts input[type=radio]:checked { background: radial-gradient(#000 3px, #fff 4px); }
.eopts .sep { margin: 0 -4px 0 4px; }
.spin { display: flex; align-items: center; width: 78px; height: 23px; border: 1px solid #666; background: #f4f4f4; padding-right: 4px; color: #777; }
.spin input { flex: 1; min-width: 0; border: 0; padding: 0 10px 0 0; background: none; text-align: right; }
.spin i { width: 6px; height: 15px; display: flex; flex-direction: column; justify-content: space-between; }
.spin i::before, .spin i::after { content: ""; border: 3px solid transparent; }
.spin i::before { border-bottom-color: #555; border-top: 0; }
.spin i::after { border-top-color: #555; border-bottom: 0; }
.mm { margin-left: -2px; margin-right: 4px; font-size: 13px; }
.draw { width: 100%; height: auto; background: #000; font-family: "DejaVu Sans", sans-serif; }
.draw .g { fill: #0f0; font-size: 13px; font-weight: bold; }
.draw .w { fill: #bbb; font-size: 11px; }
.dyn { height: 28px; padding: 2px; border-bottom: 1px solid #999; }
.dyn button { width: 58px; height: 24px; border: 1px solid #0078d7; background: #e1eef8; }
.ebtns { height: 42px; display: flex; align-items: center; justify-content: flex-end; padding-right: 13px; border-bottom: 2px solid #fff; }
.b { width: 72px; height: 24px; background: #e1e1e1; border: 1px solid #adadad; }
.b + .b { margin-left: 15px; }
.ebtns .wide { width: 105px; }
.ebtns .wide + .wide { margin-left: 23px; }
.ebtns .ok { margin-left: 33px; }
.estat { height: 20px; display: flex; gap: 2px; align-items: flex-end; }
.estat span { width: 148px; height: 20px; border: 1px solid #d5d5d5; background: linear-gradient(#fff, #eee); padding-left: 1px; line-height: 18px; }
.estat span:last-of-type { flex: 1; }
.estat .grip { margin-left: -14px; }

.dialog { left: 157px; top: 269px; width: 411px; border: 1px solid #2f8ae0; box-shadow: 0 4px 14px rgba(0,0,0,.4); }
.dialog header { height: 25px; display: flex; align-items: center; justify-content: space-between; padding: 0 9px 0 3px; background: #fff; }
.dialog header svg { width: 11px; height: 11px; }
.dialog form { padding: 14px 14px 8px 13px; }
fieldset { margin: 0 0 7px; padding: 2px 9px 6px 7px; border: 1px solid #dcdcdc; }
legend { padding: 0 6px 0 0; height: 16px; }
textarea { display: block; width: 100%; height: 41px; resize: none; border: 1px solid #777; background: #fff; outline: 0; padding: 1px 2px; font: 10px/14px "DejaVu Sans Mono", monospace; }
textarea::selection { background: #0078d7; color: #fff; }
.btns { display: flex; justify-content: flex-end; padding-top: 4px; }

.ime { position: absolute; left: 736px; top: 14px; display: flex; align-items: center; gap: 6px; width: 207px; height: 24px; padding-right: 4px; background: #fff; border: 1px solid #a9bdd3; border-left: 0; }
.ime svg { width: 16px; height: 16px; }
.ime .logo { width: 28px; height: 28px; }
.ime b { color: #1b6fc4; font-size: 15px; }
.ball { position: absolute; left: 1008px; top: -29px; width: 48px; height: 48px; border-radius: 50%; background: #3fc15c; border: 2px solid #ddd; outline: 1px solid #888; box-shadow: 0 3px 8px rgba(0,0,0,.4); color: #fff; font-weight: bold; text-align: center; padding-top: 27px; line-height: 14px; }
.marks { position: absolute; left: 0; top: 0; width: 1366px; height: 768px; pointer-events: none; }
```

FILE: app.js
```js
const list = document.getElementById('comps');
for (let n = 1; n <= 35; n++) {
  if (n === 15) continue;
  const li = document.createElement('li');
  if (n === 1) li.className = 'sel';
  li.innerHTML = '<span><svg><use href="#gear"/></svg><s>ZDYX-' + n + '</s></span>';
  list.append(li);
}
const field = document.getElementById('h');
field.focus();
field.select();
```
